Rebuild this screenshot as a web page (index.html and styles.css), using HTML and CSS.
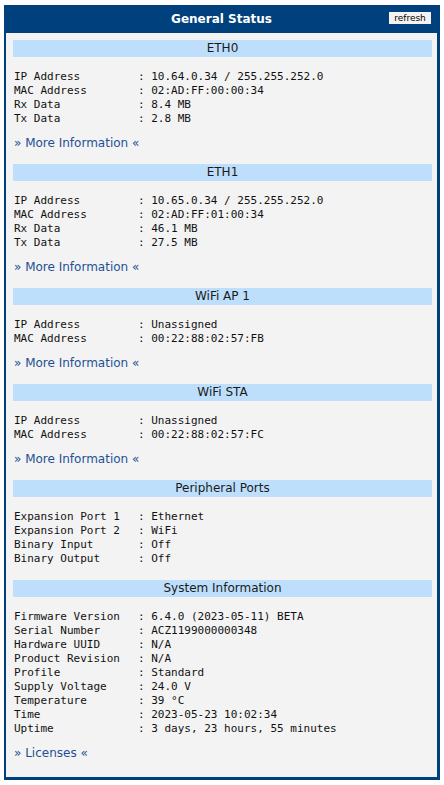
FILE: index.html
```html
<!DOCTYPE html>
<html>
<head>
<meta charset="utf-8">
<title>General Status</title>
<link rel="stylesheet" href="styles.css">
</head>
<body>
<div class="panel">
  <div class="panel-head">
    <h1 class="panel-title">General Status</h1>
    <button class="refresh" type="button">refresh</button>
  </div>
  <div class="panel-body">

    <section class="group">
      <h2 class="group-bar">ETH0</h2>
      <dl class="info has-link">
        <dt>IP Address</dt><dd>: 10.64.0.34 / 255.255.252.0</dd>
        <dt>MAC Address</dt><dd>: 02:AD:FF:00:00:34</dd>
        <dt>Rx Data</dt><dd>: 8.4 MB</dd>
        <dt>Tx Data</dt><dd>: 2.8 MB</dd>
      </dl>
      <p class="more"><a href="#">» More Information «</a></p>
    </section>

    <section class="group">
      <h2 class="group-bar">ETH1</h2>
      <dl class="info has-link">
        <dt>IP Address</dt><dd>: 10.65.0.34 / 255.255.252.0</dd>
        <dt>MAC Address</dt><dd>: 02:AD:FF:01:00:34</dd>
        <dt>Rx Data</dt><dd>: 46.1 MB</dd>
        <dt>Tx Data</dt><dd>: 27.5 MB</dd>
      </dl>
      <p class="more"><a href="#">» More Information «</a></p>
    </section>

    <section class="group">
      <h2 class="group-bar">WiFi AP 1</h2>
      <dl class="info has-link">
        <dt>IP Address</dt><dd>: Unassigned</dd>
        <dt>MAC Address</dt><dd>: 00:22:88:02:57:FB</dd>
      </dl>
      <p class="more"><a href="#">» More Information «</a></p>
    </section>

    <section class="group">
      <h2 class="group-bar">WiFi STA</h2>
      <dl class="info has-link">
        <dt>IP Address</dt><dd>: Unassigned</dd>
        <dt>MAC Address</dt><dd>: 00:22:88:02:57:FC</dd>
      </dl>
      <p class="more"><a href="#">» More Information «</a></p>
    </section>

    <section class="group">
      <h2 class="group-bar">Peripheral Ports</h2>
      <dl class="info">
        <dt>Expansion Port 1</dt><dd>: Ethernet</dd>
        <dt>Expansion Port 2</dt><dd>: WiFi</dd>
        <dt>Binary Input</dt><dd>: Off</dd>
        <dt>Binary Output</dt><dd>: Off</dd>
      </dl>
    </section>

    <section class="group">
      <h2 class="group-bar">System Information</h2>
      <dl class="info has-link">
        <dt>Firmware Version</dt><dd>: 6.4.0 (2023-05-11) BETA</dd>
        <dt>Serial Number</dt><dd>: ACZ1199000000348</dd>
        <dt>Hardware UUID</dt><dd>: N/A</dd>
        <dt>Product Revision</dt><dd>: N/A</dd>
        <dt>Profile</dt><dd>: Standard</dd>
        <dt>Supply Voltage</dt><dd>: 24.0 V</dd>
        <dt>Temperature</dt><dd>: 39 °C</dd>
        <dt>Time</dt><dd>: 2023-05-23 10:02:34</dd>
        <dt>Uptime</dt><dd>: 3 days, 23 hours, 55 minutes</dd>
      </dl>
      <p class="more"><a href="#">» Licenses «</a></p>
    </section>

  </div>
</div>
</body>
</html>
```
FILE: styles.css
```css
html, body {
  margin: 0;
  padding: 0;
  background: #ffffff;
}

body {
  padding: 5px 4px 0 4px;
  font-family: "DejaVu Sans", Verdana, sans-serif;
  font-size: 12px;
  color: #1a1a1a;
}

/* outer framed panel */
.panel {
  width: 436px;
  box-sizing: border-box;
  border-style: solid;
  border-color: #00417d;
  border-width: 0 3px 3px 2px;
  background: #f3f3f3;
}

.panel-head {
  position: relative;
  height: 28px;
  background: #00417d;
  display: flex;
  align-items: center;
  justify-content: center;
}

.panel-title {
  margin: 0;
  font-size: 12px;
  font-weight: bold;
  color: #ffffff;
  line-height: 28px;
}

.refresh {
  position: absolute;
  top: 7px;
  right: 6px;
  width: 42px;
  height: 12px;
  margin: 0;
  padding: 0;
  border: 0;
  background: #f3f3f3;
  font-family: "DejaVu Sans", Verdana, sans-serif;
  font-size: 9px;
  line-height: 12px;
  color: #000000;
}

.panel-body {
  padding: 7px 5px 16px 7px;
}

.group-bar {
  margin: 0;
  height: 17px;
  background: #bedffc;
  text-align: center;
  font-size: 12px;
  font-weight: normal;
  line-height: 17px;
  color: #1a1a1a;
}

.info {
  display: grid;
  grid-template-columns: 124px 1fr;
  margin: 13px 0 14px 1px;
  font-family: "DejaVu Sans Mono", "Liberation Mono", monospace;
  font-size: 11px;
  line-height: 14px;
  color: #111111;
  white-space: pre;
}

.info.has-link {
  margin-bottom: 9px;
}

.info dt,
.info dd {
  margin: 0;
}

.more {
  margin: 0 0 13px 1px;
  line-height: 16px;
  font-size: 12px;
}

.group:last-child .more {
  margin-bottom: 0;
}

.more a {
  color: #1d5096;
  text-decoration: none;
}
```
